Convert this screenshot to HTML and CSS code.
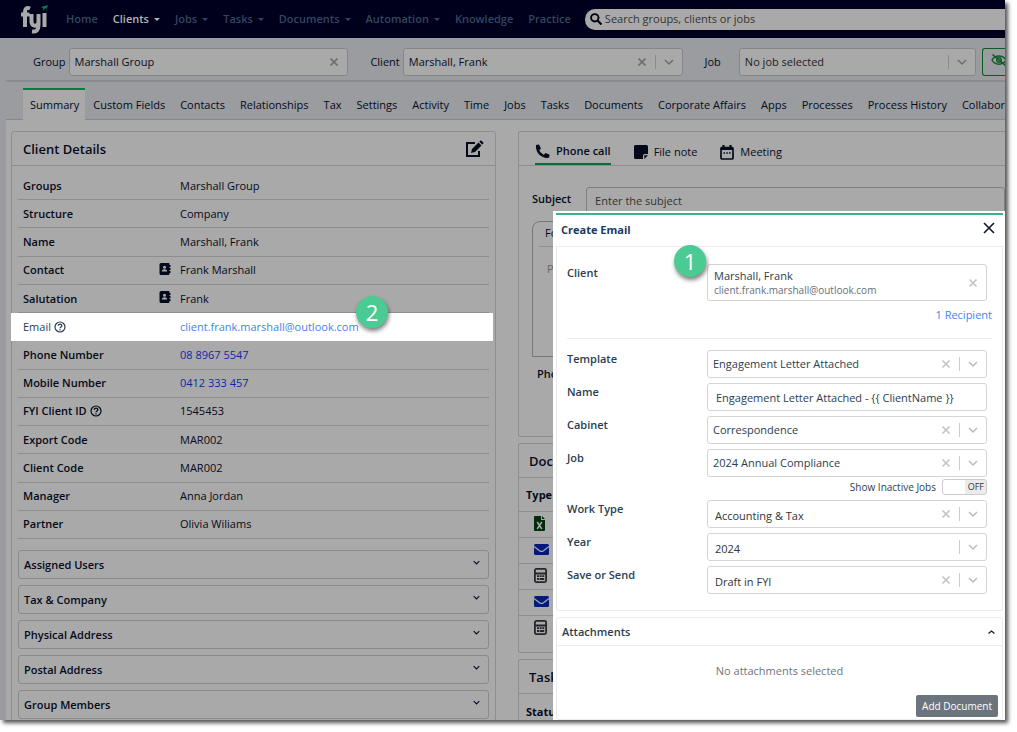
FILE: index.html
```
<!DOCTYPE html>
<html lang="en">
<head>
    <meta charset="UTF-8">
    <meta name="viewport" content="width=device-width, initial-scale=1.0">
    <title>FYI - Marshall, Frank</title>
    <link rel="stylesheet" href="styles.css">
</head>
<body>
    <svg class="sprite" aria-hidden="true">
        <symbol id="i-x" viewBox="0 0 10 10"><path d="M1.5 1.5l7 7M8.5 1.5l-7 7" fill="none" stroke="currentColor" stroke-width="1.7"/></symbol>
        <symbol id="i-down" viewBox="0 0 10 10"><path d="M1 3l4 4 4-4" fill="none" stroke="currentColor" stroke-width="1.5"/></symbol>
        <symbol id="i-help" viewBox="0 0 12 12"><circle cx="6" cy="6" r="5" fill="none" stroke="currentColor" stroke-width="1.2"/><path d="M4.3 4.8c0-2.2 3.5-2.2 3.5 0C7.8 6 6 6 6 7.3M6 8.2v1.2" fill="none" stroke="currentColor" stroke-width="1.3"/></symbol>
        <symbol id="i-contact" viewBox="0 0 12 12"><path d="M2 0h7.5a1.5 1.5 0 0 1 1 .5V2h1v2h-1v1h1v2h-1v1h1v2h-1v1a1.5 1.5 0 0 1-1 1H2a1.5 1.5 0 0 1-1.5-1.5v-9A1.5 1.5 0 0 1 2 0z" fill="currentColor"/><circle cx="5.5" cy="4.2" r="1.5" fill="#a9a9a9"/><path d="M2.8 8.5c0-3 5.4-3 5.4 0z" fill="#a9a9a9"/></symbol>
        <symbol id="i-mail" viewBox="0 0 15 11"><rect width="15" height="11" rx="1.5" fill="#04197f"/><path d="M0 2.5l5.5 4.2c1.4 1 2.6 1 4 0L15 2.5" fill="none" stroke="#a9a9a9" stroke-width="1.3"/></symbol>
        <symbol id="i-calc" viewBox="0 0 13 15"><rect x=".9" y=".9" width="11.2" height="13.2" rx="1.5" fill="none" stroke="#25272b" stroke-width="1.8"/><path d="M1 5.5h11M3 8.2h2M5.6 8.2h2M8.2 8.2h2M3 11h2M5.6 11h4.6" stroke="#25272b" stroke-width="1.8"/></symbol>
    </svg>

    <div class="app">
        <header class="topbar">
            <a class="logo" href="#" aria-label="FYI home">
                <svg width="28" height="30" viewBox="0 0 28 30">
                    <path d="M9 4.5C5.5 3 4 5 4 8v15M0 10.5h8.5M10.5 10v8c0 5 7 5 7 0v-8M17.5 16v5c0 5-2 7-6.5 6.5M23.5 9v14" fill="none" stroke="#a9a9a9" stroke-width="4"/>
                    <path d="M27 1l-7 2 2.5 1.5L21 7l4.5-3.5L25 7z" fill="#0a7a45"/>
                </svg>
            </a>
            <nav class="main-nav">
                <a href="#">Home</a>
                <a href="#" class="menu active">Clients</a>
                <a href="#" class="menu">Jobs</a>
                <a href="#" class="menu">Tasks</a>
                <a href="#" class="menu">Documents</a>
                <a href="#" class="menu">Automation</a>
                <a href="#">Knowledge</a>
                <a href="#">Practice</a>
            </nav>
            <label class="search">
                <svg width="12" height="12" viewBox="0 0 12 12"><circle cx="4.8" cy="4.8" r="3.7" fill="none" stroke="#000010" stroke-width="1.9"/><path d="M7.5 7.5l4 4" stroke="#000010" stroke-width="2.2"/></svg>
                <input type="search" placeholder="Search groups, clients or jobs" aria-label="Search">
            </label>
        </header>

        <div class="filters">
            <label for="group">Group</label>
            <div class="select">
                <select id="group"><option>Marshall Group</option></select>
                <button class="clear" aria-label="Clear group"><svg><use href="#i-x"/></svg></button>
            </div>
            <label for="client">Client</label>
            <div class="select">
                <select id="client"><option>Marshall, Frank</option></select>
                <button class="clear" aria-label="Clear client"><svg><use href="#i-x"/></svg></button>
                <span class="arrow"><svg><use href="#i-down"/></svg></span>
            </div>
            <label for="job">Job</label>
            <div class="select job">
                <select id="job"><option>No job selected</option></select>
                <span class="arrow"><svg><use href="#i-down"/></svg></span>
            </div>
            <button class="hide-btn" aria-label="Hide">
                <svg width="16" height="12" viewBox="0 0 16 12"><path d="M1 6c3-5.5 11-5.5 14 0-3 5.5-11 5.5-14 0zM1.5.5l13 11" fill="none" stroke="#0d5c25" stroke-width="1.5"/><circle cx="8" cy="6" r="2.2" fill="none" stroke="#0d5c25" stroke-width="1.5"/></svg>
            </button>
        </div>

        <nav class="tabs">
            <a href="#" class="active">Summary</a>
            <a href="#">Custom Fields</a>
            <a href="#">Contacts</a>
            <a href="#">Relationships</a>
            <a href="#">Tax</a>
            <a href="#">Settings</a>
            <a href="#">Activity</a>
            <a href="#">Time</a>
            <a href="#">Jobs</a>
            <a href="#">Tasks</a>
            <a href="#">Documents</a>
            <a href="#">Corporate Affairs</a>
            <a href="#">Apps</a>
            <a href="#">Processes</a>
            <a href="#">Process History</a>
            <a href="#">Collaborate</a>
        </nav>

        <main class="content">
            <section class="card details">
                <div class="card-head">
                    <h2>Client Details</h2>
                    <button class="edit" aria-label="Edit client details">
                        <svg width="19" height="18" viewBox="0 0 19 18"><path d="M10 3H2v13h12v-5" fill="none" stroke="currentColor" stroke-width="2"/><path d="M6 13l1-4 6.5-6.5 3 3L10 12zM14.3 1.7l1.2-1.2c.6-.6 3.5 2 2.9 2.9l-1.2 1.2z" fill="currentColor"/></svg>
                    </button>
                </div>
                <dl class="rows">
                    <div class="row"><dt>Groups</dt><dd>Marshall Group</dd></div>
                    <div class="row"><dt>Structure</dt><dd>Company</dd></div>
                    <div class="row"><dt>Name</dt><dd>Marshall, Frank</dd></div>
                    <div class="row"><dt>Contact <svg class="contact"><use href="#i-contact"/></svg></dt><dd>Frank Marshall</dd></div>
                    <div class="row"><dt>Salutation <svg class="contact"><use href="#i-contact"/></svg></dt><dd>Frank</dd></div>
                    <div class="row highlight"><dt>Email <svg class="help"><use href="#i-help"/></svg></dt><dd><a href="#">client.frank.marshall@outlook.com</a></dd><span class="badge">2</span></div>
                    <div class="row"><dt>Phone Number</dt><dd><a href="#">08 8967 5547</a></dd></div>
                    <div class="row"><dt>Mobile Number</dt><dd><a href="#">0412 333 457</a></dd></div>
                    <div class="row"><dt>FYI Client ID <svg class="help"><use href="#i-help"/></svg></dt><dd>1545453</dd></div>
                    <div class="row"><dt>Export Code</dt><dd>MAR002</dd></div>
                    <div class="row"><dt>Client Code</dt><dd>MAR002</dd></div>
                    <div class="row"><dt>Manager</dt><dd>Anna Jordan</dd></div>
                    <div class="row"><dt>Partner</dt><dd>Olivia Wiliams</dd></div>
                </dl>
                <div class="accordion">
                    <button>Assigned Users <svg><use href="#i-down"/></svg></button>
                    <button>Tax &amp; Company <svg><use href="#i-down"/></svg></button>
                    <button>Physical Address <svg><use href="#i-down"/></svg></button>
                    <button>Postal Address <svg><use href="#i-down"/></svg></button>
                    <button>Group Members <svg><use href="#i-down"/></svg></button>
                </div>
            </section>

            <div class="side">
                <section class="card notes">
                    <div class="note-tabs">
                        <button class="active"><svg width="15" height="15" viewBox="0 0 15 15"><path d="M1 1l3-.6 2 4-1.7 1.8c1 2 2.3 3.4 4.5 4.5l1.8-1.7 4 1.8-.5 3C6 15 0 8 1 1z" fill="currentColor"/></svg>Phone call</button>
                        <button><svg width="14" height="14" viewBox="0 0 14 14"><path d="M0 1.5A1.5 1.5 0 0 1 1.5 0h11A1.5 1.5 0 0 1 14 1.5V9h-3.500A1.5 1.5 0 0 0 9 10.5V14H1.5A1.5 1.5 0 0 1 0 12.5zM10.3 10.3H14L10.3 14z" fill="currentColor"/></svg>File note</button>
                        <button><svg width="14" height="15" viewBox="0 0 14 15"><rect x="1" y="2.5" width="12" height="11.5" rx="1" fill="none" stroke="currentColor" stroke-width="1.7"/><path d="M1 4h12M3.5 0v3M10.5 0v3" stroke="currentColor" stroke-width="2.2"/><path d="M3.5 8h1.5M6.3 8h1.5M9 8h1.5" stroke="currentColor" stroke-width="1.5"/></svg>Meeting</button>
                    </div>
                    <div class="subject">
                        <label for="subject">Subject</label>
                        <input id="subject" type="text" placeholder="Enter the subject">
                    </div>
                    <div class="editor">
                        <div class="editor-bar">Format</div>
                        <textarea placeholder="Phone call note" aria-label="Note"></textarea>
                    </div>
                    <div class="phone-label">Phone</div>
                </section>
                <section class="card docs">
                    <div class="card-head"><h2>Documents</h2></div>
                    <table>
                        <thead><tr><th>Type</th></tr></thead>
                        <tbody>
                            <tr><td><svg width="11" height="15" viewBox="0 0 11 15"><path d="M1 0h6v4h4v10a1 1 0 0 1-1 1H1a1 1 0 0 1-1-1V1a1 1 0 0 1 1-1zM8 0l3 3H8z" fill="#032c0c"/><path d="M3.2 6l4.6 7M7.8 6l-4.6 7" stroke="#a9a9a9" stroke-width="1.5"/></svg></td></tr>
                            <tr><td><svg width="15" height="11"><use href="#i-mail"/></svg></td></tr>
                            <tr><td><svg width="13" height="15"><use href="#i-calc"/></svg></td></tr>
                            <tr><td><svg width="15" height="11"><use href="#i-mail"/></svg></td></tr>
                            <tr><td><svg width="13" height="15"><use href="#i-calc"/></svg></td></tr>
                        </tbody>
                    </table>
                </section>
                <section class="card">
                    <div class="card-head"><h2>Tasks</h2></div>
                    <table>
                        <thead><tr><th>Status</th></tr></thead>
                    </table>
                </section>
            </div>
        </main>

        <aside class="drawer" role="dialog" aria-labelledby="drawer-title">
            <div class="drawer-head">
                <h2 id="drawer-title">Create Email</h2>
                <button class="close" aria-label="Close"><svg width="12" height="12" viewBox="0 0 12 12"><path d="M1 1l10 10M11 1L1 11" stroke="#111827" stroke-width="1.6"/></svg></button>
            </div>
            <form class="email-form">
                <div class="field recipient">
                    <label for="to">Client</label>
                    <span class="badge">1</span>
                    <div class="select tall">
                        <button type="button" id="to" class="person">Marshall, Frank<small>client.frank.marshall@outlook.com</small></button>
                        <button type="button" class="clear" aria-label="Clear client"><svg><use href="#i-x"/></svg></button>
                    </div>
                </div>
                <div class="recipients"><a href="#">1 Recipient</a></div>
                <div class="field">
                    <label for="template">Template</label>
                    <div class="select">
                        <select id="template"><option>Engagement Letter Attached</option></select>
                        <button type="button" class="clear" aria-label="Clear template"><svg><use href="#i-x"/></svg></button>
                        <span class="arrow"><svg><use href="#i-down"/></svg></span>
                    </div>
                </div>
                <div class="field">
                    <label for="name">Name</label>
                    <input id="name" type="text" value="Engagement Letter Attached - {{ ClientName }}">
                </div>
                <div class="field">
                    <label for="cabinet">Cabinet</label>
                    <div class="select">
                        <select id="cabinet"><option>Correspondence</option></select>
                        <button type="button" class="clear" aria-label="Clear cabinet"><svg><use href="#i-x"/></svg></button>
                        <span class="arrow"><svg><use href="#i-down"/></svg></span>
                    </div>
                </div>
                <div class="field">
                    <label for="email-job">Job</label>
                    <div class="select">
                        <select id="email-job"><option>2024 Annual Compliance</option></select>
                        <button type="button" class="clear" aria-label="Clear job"><svg><use href="#i-x"/></svg></button>
                        <span class="arrow"><svg><use href="#i-down"/></svg></span>
                    </div>
                </div>
                <label class="inactive">Show Inactive Jobs <input type="checkbox"><span class="switch">OFF</span></label>
                <div class="field plain">
                    <label for="work-type">Work Type</label>
                    <div class="select">
                        <select id="work-type"><option>Accounting &amp; Tax</option></select>
                        <button type="button" class="clear" aria-label="Clear work type"><svg><use href="#i-x"/></svg></button>
                        <span class="arrow"><svg><use href="#i-down"/></svg></span>
                    </div>
                </div>
                <div class="field plain">
                    <label for="year">Year</label>
                    <div class="select">
                        <select id="year"><option>2024</option></select>
                        <span class="arrow"><svg><use href="#i-down"/></svg></span>
                    </div>
                </div>
                <div class="field plain">
                    <label for="save">Save or Send</label>
                    <div class="select">
                        <select id="save"><option>Draft in FYI</option></select>
                        <button type="button" class="clear" aria-label="Clear save or send"><svg><use href="#i-x"/></svg></button>
                        <span class="arrow"><svg><use href="#i-down"/></svg></span>
                    </div>
                </div>
            </form>
            <section class="attachments">
                <button class="attach-head">Attachments <svg width="7" height="4" viewBox="0 0 7 4"><path d="M.5 3.5l3-2.5 3 2.5" fill="none" stroke="#222" stroke-width="1.3"/></svg></button>
                <p>No attachments selected</p>
                <button class="add">Add Document</button>
            </section>
        </aside>
    </div>
</body>
</html>
```
FILE: styles.css
```
* {
    box-sizing: border-box;
}

body {
    min-height: 100vh;
    margin: 0;
    background-color: #fff;
    color: #050a1a;
    font-family: "Open Sans", "Noto Sans", sans-serif;
    font-size: 11px;
    line-height: 16px;
}

button,
input,
select,
textarea {
    font: inherit;
    color: inherit;
    margin: 0;
    padding: 0;
    border: none;
    background: none;
}

a {
    color: inherit;
    text-decoration: none;
}

h2 {
    margin: 0;
    font-size: 13px;
    font-weight: 600;
}

svg {
    flex: none;
}

.sprite {
    display: none;
}

.app {
    position: relative;
    display: flex;
    flex-direction: column;
    height: calc(100vh - 12px);
    margin-right: 12px;
    overflow: hidden;
    background-color: #9a9ca0;
    box-shadow: 3px 3px 4px #555;
}

/* top bar */
.topbar {
    display: flex;
    align-items: center;
    flex: none;
    height: 38px;
    padding-left: 21px;
    background-color: #00001c;
}

.logo {
    height: 30px;
    margin-right: 17px;
}

.main-nav {
    display: flex;
    gap: 15px;
    padding-bottom: 1px;
    color: #32475f;
    font-weight: 600;
}

.main-nav .active {
    color: #b4b4b4;
}

.menu::after {
    content: "";
    display: inline-block;
    margin-left: 5px;
    border: 3px solid transparent;
    border-top-color: currentColor;
    border-bottom: none;
    vertical-align: middle;
}

.search {
    display: flex;
    align-items: center;
    gap: 3px;
    flex: 1;
    height: 21px;
    margin-left: 14px;
    padding-left: 5px;
    border-radius: 10px 0 0 10px;
    background-color: #a9a9a9;
}

.search input {
    flex: 1;
    outline: none;
}

input::placeholder,
textarea::placeholder {
    color: #333;
    opacity: 1;
}

/* group, client and job filters */
.filters {
    display: flex;
    align-items: center;
    flex: none;
    height: 44px;
    margin-left: 6px;
    padding: 6px 0 0 27px;
    border-bottom: 2px solid #8b8c90;
}

.filters label {
    margin-right: 3px;
}

.filters .select {
    flex: 280 0 0;
    margin-right: 22px;
    border-color: #85868a;
    background-color: #a9a9a9;
    color: #0a0e1c;
}

.filters .select.job {
    flex-grow: 237;
    margin: 0 6px 0 15px;
    color: #222;
}

.filters .clear,
.filters .arrow {
    color: #6d6d6d;
}

.filters .arrow {
    border-color: #8a8a8a;
}

.select {
    display: flex;
    align-items: center;
    height: 28px;
    border: 1px solid #d5d5d5;
    border-radius: 3px;
}

.select select {
    flex: 1;
    min-width: 0;
    height: 100%;
    padding-left: 5px;
    appearance: none;
    outline: none;
}

.select svg {
    display: block;
    width: 10px;
    height: 10px;
}

.clear {
    padding: 0 8px;
    color: #c4c4c4;
}

.arrow {
    padding: 2px 8px;
    border-left: 1px solid #ccc;
    color: #bbb;
}

.hide-btn {
    width: 23px;
    height: 28px;
    padding-left: 8px;
    border: 1px solid #0d5c25;
    border-right: none;
    border-radius: 3px 0 0 3px;
    overflow: hidden;
}

/* client tabs */
.tabs {
    display: flex;
    align-items: flex-end;
    flex: none;
    height: 38px;
    margin-left: 6px;
    padding-left: 17px;
    border-bottom: 1px solid #86878a;
    white-space: nowrap;
}

.tabs a {
    height: 31px;
    padding: 7px 7px 0 8px;
    border-top: 2px solid transparent;
}

.tabs .active {
    height: 32px;
    padding: 7px 6px 0 7px;
    border-top-color: #0b7a40;
    margin-bottom: -1px;
    background-color: #a9a9a9;
}

/* page body */
.content {
    display: flex;
    align-items: flex-start;
    flex: 1;
    gap: 22px;
    margin-left: 6px;
    padding: 11px 0 0 5px;
    background-color: #a9a9a9;
}

.card {
    border: 1px solid #8e8e8e;
    border-radius: 3px;
}

.details {
    flex: 484 0 0;
}

.side {
    display: flex;
    flex-direction: column;
    flex: 488 0 0;
    gap: 6px;
}

.side .card {
    border-right: none;
    border-radius: 3px 0 0 3px;
}

.side .card-head {
    padding: 0 10px;
}

.card-head {
    display: flex;
    align-items: center;
    justify-content: space-between;
    height: 34px;
    padding: 0 11px;
    border-bottom: 1px solid #8e8e8e;
}

.edit svg {
    display: block;
}

.rows {
    display: grid;
    grid-auto-rows: 1fr;
    height: 379px;
    margin: 0;
    padding: 6px 6px;
}

.row {
    display: flex;
    align-items: center;
    padding-left: 5px;
    border-bottom: 1px solid #8e8e8e;
}

.row dt {
    display: flex;
    align-items: center;
    gap: 3px;
    width: 157px;
    font-weight: 600;
}

.row dd {
    margin: 0;
}

.row a {
    color: #0a2aa5;
}

.row.highlight {
    position: relative;
    margin: 0 -4px 0 -7px;
    padding-left: 12px;
    border-bottom: none;
    background-color: #fff;
}

.row.highlight dt {
    color: #2b3e50;
    font-weight: 500;
}

.row.highlight a {
    color: #4582f5;
}

.row.highlight .badge {
    top: -17px;
    left: 345px;
}

.help {
    width: 12px;
    height: 12px;
}

.contact {
    width: 12px;
    height: 12px;
    margin: 0 9px 3px auto;
}

.badge {
    position: absolute;
    width: 32px;
    height: 32px;
    border-radius: 50%;
    background-color: #4bcb93;
    box-shadow: 1px 3px 4px rgba(0, 0, 0, 0.5);
    color: #fff;
    font-size: 22px;
    line-height: 32px;
    text-align: center;
}

.accordion {
    display: flex;
    flex-direction: column;
    gap: 6px;
    padding: 5px 6px;
}

.accordion button {
    display: flex;
    align-items: center;
    justify-content: space-between;
    height: 29px;
    padding: 0 8px 0 5px;
    border: 1px solid #8a8a8a;
    border-radius: 3px;
    font-weight: 600;
}

.accordion svg {
    width: 7px;
    height: 7px;
    margin-bottom: 4px;
}

/* notes card */
.notes {
    height: 306px;
}

.note-tabs {
    display: flex;
    gap: 23px;
    height: 34px;
    padding: 0 16px;
    border-bottom: 1px solid #8e8e8e;
}

.note-tabs button {
    display: flex;
    align-items: center;
    gap: 6px;
    padding-top: 7px;
}

.note-tabs .active {
    border-bottom: 2px solid #0b6b3c;
    font-weight: 600;
}

.subject {
    display: flex;
    align-items: center;
    gap: 15px;
    padding: 21px 0 0 13px;
}

.subject label {
    padding-bottom: 4px;
    font-weight: 600;
}

.subject input {
    flex: 1;
    height: 28px;
    padding: 0 0 2px 8px;
    border: 1px solid #808080;
    border-radius: 3px;
}

.editor {
    height: 136px;
    margin: 6px 20px 0 13px;
    padding: 0 6px;
    border: 1px solid #777;
    border-radius: 8px 8px 0 0;
}

.editor-bar {
    height: 25px;
    padding: 3px 6px;
    border-bottom: 1px solid #8e8e8e;
    font-weight: 500;
}

.editor textarea {
    display: block;
    width: 100%;
    height: 100px;
    padding: 14px 8px;
    resize: none;
}

.editor textarea::placeholder {
    color: #666;
}

.phone-label {
    padding: 9px 18px;
    font-weight: 600;
}

/* documents and tasks lists */
.docs {
    height: 210px;
}

table {
    width: 100%;
    border-collapse: collapse;
}

th {
    height: 33px;
    padding: 2px 7px 0;
    font-weight: 700;
    text-align: left;
}

td {
    height: 26px;
    padding: 0 15px 2px;
    border-top: 1px solid #8e8e8e;
}

td svg {
    display: block;
}

/* create email drawer */
.drawer {
    position: absolute;
    top: 211px;
    right: 0;
    bottom: 0;
    width: 452px;
    padding: 2px 2px 0 3px;
    background-color: #fff;
    color: #2b3e50;
}

.drawer-head {
    display: flex;
    align-items: center;
    justify-content: space-between;
    height: 34px;
    padding: 0 8px 2px 5px;
    border-top: 2px solid #3fb27f;
    border-bottom: 1px solid #ececec;
}

.drawer-head h2 {
    color: #1d3a5c;
    font-size: 11px;
    font-weight: 700;
}

.email-form {
    display: flex;
    flex-direction: column;
    gap: 5px;
    padding: 17px 10px 16px;
    border: 1px solid #ececec;
    border-top: none;
    border-radius: 0 0 3px 3px;
}

.field {
    display: flex;
    position: relative;
    padding-right: 5px;
}

.field label {
    width: 140px;
    padding-top: 1px;
    font-weight: 600;
}

.field .select,
.field input {
    flex: 1;
}

.field input {
    height: 28px;
    padding-left: 8px;
    border: 1px solid #d5d5d5;
    border-radius: 3px;
}

.plain select {
    padding: 4px 0 0 7px;
    color: #333;
}

.field .tall {
    height: 37px;
}

.person {
    flex: 1;
    padding-left: 6px;
    line-height: 14px;
    text-align: left;
}

.person small {
    display: block;
    color: #666f78;
    font-size: 10px;
}

.recipient .badge {
    top: -19px;
    left: 107px;
}

.recipients {
    margin-bottom: 6px;
    padding: 1px 0 15px;
    border-bottom: 1px solid #ececec;
    text-align: right;
}

.recipients a {
    color: #4582f5;
}

.inactive {
    display: flex;
    align-items: center;
    justify-content: flex-end;
    gap: 6px;
    height: 16px;
    margin-top: -3px;
    padding-right: 5px;
    font-size: 10px;
}

.inactive input {
    width: 0;
    height: 0;
    margin-left: -6px;
    appearance: none;
}

.switch {
    width: 45px;
    padding-right: 2px;
    border: 1px solid #ccc;
    border-radius: 3px;
    background: linear-gradient(to right, #fff 50%, #ebebeb 50%);
    color: #333;
    font-size: 9px;
    line-height: 14px;
    text-align: right;
}

.attachments {
    display: flex;
    flex-direction: column;
    margin-top: 6px;
    border: 1px solid #ececec;
    border-radius: 3px;
}

.attach-head {
    display: flex;
    align-items: center;
    justify-content: space-between;
    height: 28px;
    padding: 0 7px 0 5px;
    border-bottom: 1px solid #ececec;
    font-weight: 600;
}

.attachments p {
    margin: 17px 0 16px;
    color: #6c757d;
    text-align: center;
}

.add {
    align-self: flex-end;
    height: 22px;
    margin: 0 4px 2px;
    padding: 0 6px;
    border-radius: 2px;
    background-color: #6c757d;
    color: #fff;
    font-size: 10px;
    font-weight: 500;
}
```
